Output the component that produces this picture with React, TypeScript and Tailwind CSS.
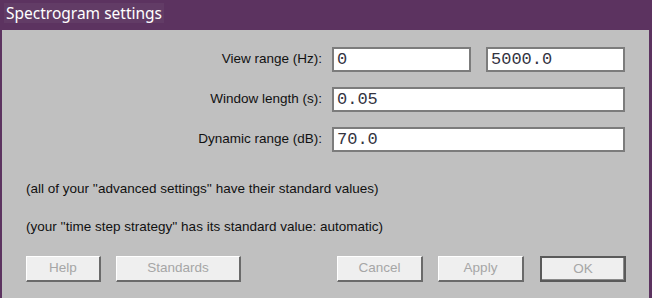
import React from "react";

const Btn = ({ label, w, def }: { label: string; w: string; def?: boolean }) => (
  <div
    className={`${w} h-[26px] flex items-center justify-center bg-[#efefef] text-[#a6a6a6] text-[13.5px] ${
      def
        ? "border-2 border-[#5a5a5a] shadow-[inset_-1px_-1px_0_#8a8a8a]"
        : "border-t border-l border-t-white border-l-white border-b-2 border-r-2 border-b-[#6a6a6a] border-r-[#6a6a6a]"
    }`}
    style={{ fontFamily: "'Liberation Sans', Arial, sans-serif" }}
  >
    {label}
  </div>
);

const Field = ({ value, w }: { value: string; w: string }) => (
  <div
    className={`${w} h-[25px] bg-white border-2 border-[#7c7c7c] flex items-center pl-[3px] text-[17px] text-[#33333f]`}
    style={{ fontFamily: "'Liberation Mono', 'Courier New', monospace" }}
  >
    {value}
  </div>
);

export default function App() {
  return (
    <div className="w-[652px] h-[298px] flex flex-col bg-[#5c3360] overflow-hidden">
      <div className="h-[30px] shrink-0 flex items-start pt-[3px] pl-[4px]">
        <div
          className="h-[20px] px-[2px] bg-[#623c66] text-white text-[15.5px] leading-[20px]"
          style={{ fontFamily: "'Noto Sans', 'Open Sans', sans-serif" }}
        >
          Spectrogram settings
        </div>
      </div>
      <div
        className="flex-1 ml-[2px] mr-[3px] bg-[#c0c0c0] flex flex-col text-[13.5px] text-[#111]"
        style={{ fontFamily: "'Liberation Sans', Arial, sans-serif" }}
      >
        <div className="flex items-center mt-[17px] h-[25px]">
          <div className="w-[320px] text-right">View range (Hz):</div>
          <div className="ml-[10px] flex gap-[15px]">
            <Field value="0" w="w-[139px]" />
            <Field value="5000.0" w="w-[139px]" />
          </div>
        </div>
        <div className="flex items-center mt-[15px] h-[25px]">
          <div className="w-[320px] text-right">Window length (s):</div>
          <div className="ml-[10px]">
            <Field value="0.05" w="w-[293px]" />
          </div>
        </div>
        <div className="flex items-center mt-[15px] h-[25px]">
          <div className="w-[320px] text-right">Dynamic range (dB):</div>
          <div className="ml-[10px]">
            <Field value="70.0" w="w-[293px]" />
          </div>
        </div>
        <div className="ml-[24px] mt-[29px] leading-[16px]">
          (all of your ''advanced settings'' have their standard values)
        </div>
        <div className="ml-[24px] mt-[22px] leading-[16px]">
          (your ''time step strategy'' has its standard value: automatic)
        </div>
        <div className="flex mt-[21px] ml-[24px]">
          <div className="flex gap-[15px]">
            <Btn label="Help" w="w-[75px]" />
            <Btn label="Standards" w="w-[125px]" />
          </div>
          <div className="flex gap-[15px] ml-[96px]">
            <Btn label="Cancel" w="w-[86px]" />
            <Btn label="Apply" w="w-[86px]" />
            <div className="ml-[1px]">
              <Btn label="OK" w="w-[86px]" def />
            </div>
          </div>
        </div>
      </div>
    </div>
  );
}
